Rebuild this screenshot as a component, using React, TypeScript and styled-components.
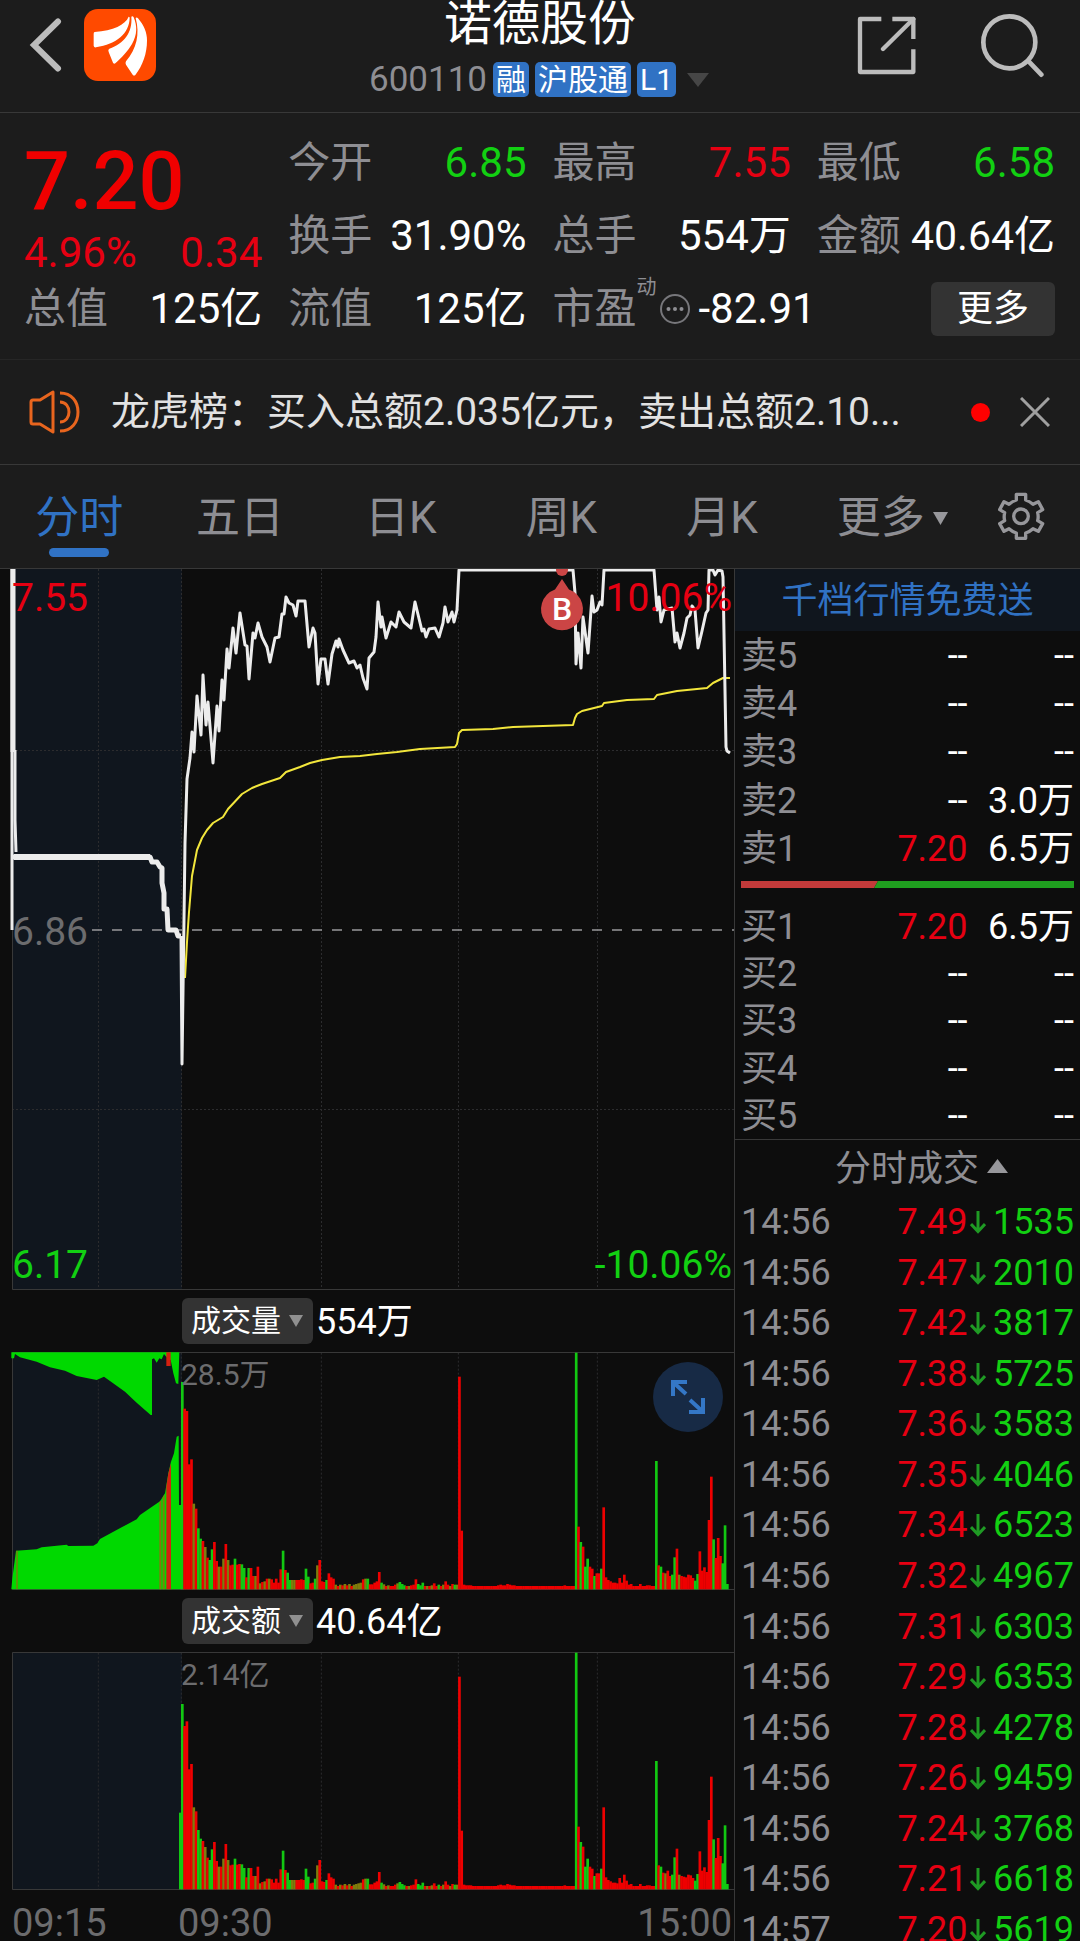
import React from "react";
import styled, { createGlobalStyle } from "styled-components";

const c = {
  panel: "#1c1c1c",
  page: "#0d0d0d",
  auction: "#10161e",
  line: "#383838",
  label: "#8e8e93",
  dim: "#6c6c6e",
  text: "#ffffff",
  up: "#e60012",
  down: "#12d012",
  blue: "#3072c4",
};

const GlobalStyle = createGlobalStyle`
  * { box-sizing: border-box; }
  body {
    margin: 0;
    background: ${c.page};
    color: ${c.text};
    font-family: Roboto, "Noto Sans CJK SC", sans-serif;
  }
  button, select { font: inherit; color: inherit; border: 0; padding: 0; margin: 0; background: none; }
  a { color: inherit; text-decoration: none; }
  h1, p, dl, dt, dd { margin: 0; font-weight: 400; }
  svg { display: block; flex-shrink: 0; }
`;

type Tone = "up" | "down" | "text" | "label";

const Screen = styled.div`
  display: flex;
  flex-direction: column;
  height: 100vh;
  overflow: hidden;
`;

/* ---------- header ---------- */

const Header = styled.header`
  display: grid;
  grid-template-columns: 1fr auto 1fr;
  flex: none;
  background: ${c.panel};
  border-bottom: 1px solid ${c.line};
`;

const HeaderSide = styled.div<{ $end?: boolean }>`
  display: flex;
  align-items: flex-start;
  justify-content: ${(p) => (p.$end ? "flex-end" : "flex-start")};
  gap: ${(p) => (p.$end ? 64 : 22)}px;
  padding: ${(p) => (p.$end ? "13px 36px 0 0" : "9px 0 0 28px")};
`;

const IconButton = styled.button`
  display: flex;
  align-items: center;
  justify-content: center;
  cursor: pointer;
`;

const TitleBlock = styled.div`
  display: flex;
  flex-direction: column;
  align-items: center;
  gap: 14px;
  padding-bottom: 15px;
`;

const StockName = styled.h1`
  font-size: 48px;
  line-height: 48px;
`;

const CodeRow = styled.div`
  display: flex;
  align-items: center;
  gap: 6px;
  height: 35px;
  padding-right: 2px;
  font-size: 35px;
  line-height: 35px;
  color: ${c.label};
`;

const Tag = styled.span`
  padding: 0 3px;
  border-radius: 5px;
  background: ${c.blue};
  color: ${c.text};
  font-size: 30px;
  line-height: 35px;
`;

const Caret = styled.svg<{ $gap: number }>`
  margin-left: ${(p) => p.$gap}px;
`;

/* ---------- quote ---------- */

const Quote = styled.section`
  display: grid;
  grid-template-columns: repeat(4, minmax(0, 1fr));
  grid-template-rows: repeat(3, 72px);
  column-gap: 26px;
  row-gap: 1px;
  flex: none;
  padding: 14px 25px 14px 24px;
  background: ${c.panel};
  border-bottom: 1px solid #262626;
  font-size: 42px;
  line-height: 50px;
`;

const PriceBlock = styled.div`
  grid-row: span 2;
  display: flex;
  flex-direction: column;
  gap: 14px;
  padding-top: 17px;
  color: ${c.up};
`;

const Price = styled.strong`
  font-size: 81px;
  line-height: 76px;
  font-weight: 500;
  color: #f00000;
`;

const Change = styled.div`
  display: flex;
  justify-content: space-between;
  line-height: 38px;
`;

const Stat = styled.dl`
  display: flex;
  align-items: center;
  justify-content: space-between;
  white-space: nowrap;
`;

const StatLabel = styled.dt`
  color: ${c.label};
`;

const StatValue = styled.dd<{ $tone?: Tone; $compact?: boolean }>`
  font-size: ${(p) => (p.$compact ? 41 : 42)}px;
  color: ${(p) => c[p.$tone ?? "text"]};
`;

const RatioStat = styled(Stat)`
  justify-content: flex-start;
`;

const Superscript = styled.span`
  align-self: flex-start;
  padding-top: 4px;
  margin-right: 2px;
  font-size: 20px;
  line-height: 20px;
  color: ${c.label};
`;

const RatioValue = styled(StatValue)`
  margin-left: 8px;
`;

const MoreButton = styled.button`
  align-self: center;
  justify-self: end;
  padding: 0 26px;
  border-radius: 6px;
  background: #333333;
  font-size: 36px;
  line-height: 54px;
  cursor: pointer;
`;

/* ---------- notice ---------- */

const Notice = styled.section`
  display: flex;
  align-items: center;
  flex: none;
  height: 105px;
  padding: 0 30px 0 28px;
  background: ${c.panel};
  border-bottom: 1px solid ${c.line};
`;

const NoticeText = styled.a`
  flex: 1;
  min-width: 0;
  margin-left: 31px;
  overflow: hidden;
  white-space: nowrap;
  font-size: 39px;
  line-height: 52px;
  color: #e2e2e2;
`;

const UnreadDot = styled.span`
  width: 19px;
  height: 19px;
  margin-right: 30px;
  border-radius: 50%;
  background: #ff0000;
`;

/* ---------- tabs ---------- */

const Tabs = styled.nav`
  display: grid;
  grid-template-columns: repeat(5, 161fr) 180fr 76fr;
  flex: none;
  height: 104px;
  padding-right: 21px;
  background: ${c.panel};
  border-bottom: 1px solid ${c.line};
  font-size: 44px;
  line-height: 60px;
`;

const Tab = styled.button<{ $active?: boolean }>`
  position: relative;
  display: flex;
  align-items: center;
  justify-content: center;
  padding: 3px 2px 0 0;
  color: ${(p) => (p.$active ? c.blue : c.label)};
  cursor: pointer;

  &::after {
    content: "";
    display: ${(p) => (p.$active ? "block" : "none")};
    position: absolute;
    bottom: 11px;
    width: 60px;
    height: 9px;
    border-radius: 5px;
    background: ${c.blue};
  }
`;

/* ---------- body ---------- */

const Body = styled.main`
  display: grid;
  grid-template-columns: 734fr 346fr;
  align-items: start;
  flex: 1;
  min-height: 0;
  overflow: hidden;
`;

const Charts = styled.section`
  min-width: 0;
`;

const Plot = styled.div`
  position: relative;

  > svg {
    width: 100%;
    height: auto;
  }
`;

type Corner = "topLeft" | "middleLeft" | "bottomLeft" | "topRight" | "bottomRight" | "session";
const corners: Record<Corner, string> = {
  topLeft: "top: 7px; left: 12px;",
  middleLeft: "top: 50%; left: 12px; margin-top: -20px;",
  bottomLeft: "bottom: 3px; left: 12px;",
  topRight: "top: 7px; right: 2px;",
  bottomRight: "bottom: 3px; right: 2px;",
  session: "top: 1px; left: 181px;",
};

const AxisLabel = styled.span<{ $at: Corner; $color: string }>`
  position: absolute;
  ${(p) => corners[p.$at]}
  font-size: ${(p) => (p.$at === "session" ? 30 : 39)}px;
  line-height: 44px;
  color: ${(p) => p.$color};
`;

const IndicatorBar = styled.div`
  display: flex;
  align-items: center;
  gap: 3px;
  height: 62px;
  padding-left: 182px;
  font-size: 36px;
  line-height: 46px;
`;

const Reading = styled.span`
  padding-top: 2px;
`;

const Picker = styled.label`
  position: relative;
  display: block;

  > svg {
    position: absolute;
    right: 10px;
    top: 17px;
    pointer-events: none;
  }
`;

const PickerSelect = styled.select`
  display: block;
  appearance: none;
  height: 46px;
  padding: 0 32px 0 9px;
  border-radius: 6px;
  background: #333333;
  font-size: 30px;
  line-height: 46px;
`;

const ExpandButton = styled.button`
  position: absolute;
  top: 10px;
  right: 11px;
  display: flex;
  align-items: center;
  justify-content: center;
  width: 70px;
  height: 70px;
  border-radius: 50%;
  background: #172a45;
  cursor: pointer;
`;

const TimeAxis = styled.div`
  display: grid;
  grid-template-columns: 166px 1fr auto;
  padding: 12px 2px 0 12px;
  font-size: 38px;
  line-height: 42px;
  color: ${c.dim};
`;

/* ---------- order book and trades ---------- */

const Side = styled.aside`
  border-left: 1px solid ${c.line};
`;

const Promo = styled.a`
  display: block;
  padding-top: 2px;
  background: ${c.auction};
  color: ${c.blue};
  font-size: 36px;
  line-height: 60px;
  text-align: center;
`;

const DataTable = styled.table<{ $height: number }>`
  width: 100%;
  height: ${(p) => p.$height}px;
  border-collapse: collapse;
  table-layout: fixed;
  font-size: 36px;
  line-height: 42px;
`;

const RowHead = styled.th`
  width: 37%;
  padding: 2px 0 0 6px;
  text-align: left;
  font-weight: 400;
  color: ${c.label};
`;

const Cell = styled.td<{ $tone?: Tone; $last?: boolean }>`
  padding: 2px ${(p) => (p.$last ? 6 : 2)}px 0 0;
  text-align: right;
  white-space: nowrap;
  color: ${(p) => c[p.$tone ?? "text"]};
`;

const PriceCell = styled(Cell)`
  width: 31%;
`;

const Quantity = styled.span`
  display: flex;
  align-items: center;
  justify-content: space-between;
`;

const BalanceBar = styled.div`
  margin: 9px 6px 14px;

  svg {
    width: 100%;
  }
`;

const TradesToggle = styled.button`
  display: flex;
  align-items: center;
  justify-content: center;
  width: 100%;
  height: 57px;
  padding: 2px 0 0 28px;
  border-top: 1px solid ${c.line};
  font-size: 36px;
  line-height: 42px;
  color: ${c.label};
  cursor: pointer;

  svg {
    margin-bottom: 6px;
  }
`;

/* ---------- icons ---------- */

const Down = ({ w, h, fill, gap = 0 }: { w: number; h: number; fill: string; gap?: number }) => (
  <Caret $gap={gap} width={w} height={h} viewBox="0 0 10 10" preserveAspectRatio="none">
    <path d="M0 0H10L5 10Z" fill={fill} />
  </Caret>
);

const BackIcon = () => (
  <svg width="34" height="72" viewBox="28 9 34 72" fill="none" stroke="#bcbcbc" strokeWidth="6" strokeLinecap="round">
    <path d="M58 21.500L34 45L58 68.500" strokeLinejoin="miter" />
  </svg>
);

const Logo = () => (
  <svg width="72" height="72" viewBox="252 27 216 216">
    <rect x="252" y="27" width="216" height="216" rx="42" fill="#ff4a00" />
    <g fill="#fff">
      <path d="M386 50C376 74 340 92 284 96Q281 97 281 101V137Q282 143 288 142C350 132 388 100 389 54Q389 50 386 50Z" />
      <path d="M394 50Q398 47 401 52C412 78 412 104 396 132C384 153 364 174 346 190Q342 193 339 188L326 156Q323 149 328 146C372 130 398 98 394 50Z" />
      <path d="M407 54Q410 50 414 55C432 76 441 98 441 122C441 160 428 196 406 225Q402 229 398 224L378 194Q375 189 378 184C410 146 420 102 407 54Z" />
    </g>
  </svg>
);

const ShareIcon = () => (
  <svg width="60" height="64" viewBox="48 39 180 192" fill="none" stroke="#bcbcbc" strokeWidth="13" strokeLinejoin="round">
    <path d="M124 57H60V216H220V148M157 57H220V117" />
    <path d="M220 57L129 147" strokeLinecap="round" />
  </svg>
);

const SearchIcon = () => (
  <svg width="64" height="66" viewBox="420 39 192 198" fill="none" stroke="#bcbcbc" strokeWidth="14" strokeLinecap="round">
    <circle cx="508" cy="127" r="78" />
    <path d="M566 184L604 224" />
  </svg>
);

const SpeakerIcon = () => (
  <svg width="52" height="46" viewBox="0 0 52 46" fill="none" stroke="#e8651e" strokeWidth="3" strokeLinejoin="round">
    <path d="M3 13Q3 11 5 11H12L25 3V43L12 35H5Q3 35 3 33Z" />
    <path d="M32 4C44 4 50 13 50 23S44 42 32 42" />
    <path d="M32 13C38 13 41 18 41 23S38 33 32 33" />
  </svg>
);

const CloseIcon = () => (
  <svg width="30" height="30" viewBox="0 0 30 30" stroke="#a0a0a0" strokeWidth="3">
    <path d="M1 1L29 29M29 1L1 29" />
  </svg>
);

const GearIcon = () => (
  <svg width="48" height="50" viewBox="532 336 144 150" fill="none" stroke="#97979b" strokeWidth="10" strokeLinejoin="round">
    <path d="M590 343H618V360Q630 364 640 373L656 365L669 389L654 398Q657 410 654 422L669 431L656 454L640 446Q630 455 618 459V475H590V459Q578 455 568 446L553 454L540 431L555 422Q552 410 555 398L540 389L553 365L568 373Q578 364 590 360Z" />
    <circle cx="604" cy="409" r="22" />
  </svg>
);

const DotsIcon = () => (
  <svg width="32" height="32" viewBox="0 0 32 32" fill={c.label}>
    <circle cx="16" cy="16" r="14" fill="none" stroke="#77777b" strokeWidth="2" />
    <circle cx="9.500" cy="16" r="2" />
    <circle cx="16" cy="16" r="2" />
    <circle cx="22.500" cy="16" r="2" />
  </svg>
);

const ExpandIcon = () => (
  <svg width="36" height="36" viewBox="0 0 36 36" fill="none" stroke="#3477c6" strokeWidth="4">
    <path d="M3 17V3H17M4 4L16 15" />
    <path d="M33 19V33H19M32 32L20 21" />
  </svg>
);

const ArrowDownIcon = () => (
  <svg width="16" height="24" viewBox="0 0 16 24" fill="none" stroke="#1f9a24" strokeWidth="3">
    <path d="M8 1V21M1 14L8 21.500L15 14" />
  </svg>
);

/* ---------- charts ---------- */

const priceLine =
  "181,936 182,1064 184,919 185,843 187,779 190,758 192,732 194,752 197,696 201,735 203,675 206,725 208,702 213,763 217,706 219,731 222,680 224,700 227,649 229,668 233,628 236,653 240,613 245,645 247,646 249,679 253,633 255,638 258,623 262,637 267,647 270,662 275,638 279,637 282,614 284,614 286,597 289,603 293,605 296,616 298,601 305,601 309,647 313,628 315,633 318,684 321,659 325,659 328,684 332,654 336,641 338,647 339,639 343,650 349,663 354,661 357,668 360,665 363,678 367,689 369,658 374,652 376,637 378,602 381,627 382,617 386,638 391,622 396,627 399,612 404,622 411,628 415,602 422,631 424,629 426,637 429,629 435,628 439,637 443,623 445,607 448,622 452,612 454,622 457,610 459,570 573,570 575,593 576,664 578,633 581,668 583,617 588,653 592,596 594,612 597,610 600,602 602,605 604,570 654,570 657,610 659,597 661,622 664,610 672,608 675,642 677,633 680,648 684,633 687,618 690,615 692,606 695,610 698,648 702,631 706,613 708,610 709,570 713,570 715,575 718,570 722,571 723,577 726,747 727,751 730,753";

const auctionLine =
  "12,857 150,857 152,862 157,862 160,867 162,868 162,883 164,893 164,909 167,909 168,930 176,930 178,936 181,936";

const averageLine =
  "185,978 187,942 189,912 192,876 197,850 202,838 207,830 213,823 223,817 228,809 242,794 252,788 262,784 280,778 286,772 300,767 310,763 322,760 340,757 360,756 377,754 397,752 420,749 455,747 457,744 459,733 462,730 493,729 513,727 573,725 575,718 577,714 582,711 602,706 604,703 627,700 654,699 657,695 677,691 707,688 713,683 723,678 730,678";

const gridX = [98, 181, 321, 458, 597];

const PriceChart = () => (
  <svg viewBox="0 569 734 721" role="img" aria-label="分时走势">
    <rect x="12" y="569" width="170" height="721" fill={c.auction} />
    <g stroke="#2c2c2e" strokeWidth="1" strokeDasharray="2 2">
      {gridX.map((x) => (
        <path key={x} d={`M${x + 0.5} 569V1289`} />
      ))}
      <path d="M12 750.500H734M12 1109.500H734" />
    </g>
    <path d="M12.500 569V1289.500H734" fill="none" stroke={c.line} />
    <path d="M92 930H734" stroke="#98989a" strokeWidth="1.500" strokeDasharray="10 10" />
    <polyline points={averageLine} fill="none" stroke="#f2e63c" strokeWidth="2" strokeLinejoin="round" />
    <g fill="none" stroke="#ececec" strokeLinejoin="round">
      <path d="M12 569V930" strokeWidth="3" />
      <path d="M13 569V752" strokeWidth="5" />
      <path d="M15 750V820L16 852" strokeWidth="3" />
      <path d="M14 857H150" strokeWidth="6" />
      <polyline points={auctionLine} strokeWidth="5" />
      <polyline points={priceLine} strokeWidth="3" />
    </g>
    <g fill="#cb4545">
      <circle cx="562" cy="570" r="6" />
      <path d="M562 579L569 589.500A21 21 0 1 1 555 589.500Z" />
    </g>
    <text x="562" y="620" textAnchor="middle" fontSize="32" fontWeight="500" fill="#fff">
      B
    </text>
  </svg>
);

/* One entry per minute: colour letter (r, g, or m for a mixed minute) and bar height. */
const minutes = (
  "g622 r542 r535 r375 r390 m257 r242 g183 g152 r145 m127 r95 g88 g120 r142 r85 m68 r68 m92 r136 m88 r72 r74 g92 r74 r76 g75 g64 r36 g64 " +
  "r64 r40 m40 r68 m18 r22 m24 r32 m32 r30 r20 r32 r20 r60 g116 r58 g50 g28 m28 m28 r28 r28 r30 r28 g62 g38 r18 r20 g32 m72 " +
  "r88 r24 r22 g28 r48 r36 r32 m14 r10 m14 r12 m16 r12 m16 r10 m14 m16 m18 m20 r30 m32 g32 r15 r15 r20 r24 r52 g20 m15 r10 " +
  "m12 r10 r10 r14 m18 g22 g16 g12 r10 m10 r12 r14 r30 g16 g12 g20 r10 m10 r10 m12 r18 r10 g14 r10 m14 r24 r14 m10 r16 g14 " +
  "m14 r638 r176 r14 r12 r12 r12 r10 r10 r10 r10 r10 r10 r10 r10 r10 r10 r10 r12 r14 r12 r12 r16 r14 r12 r12 r10 r10 r10 r10 " +
  "r10 r10 r10 r10 r10 r10 r10 r10 r10 r10 r10 r10 r10 r10 r10 r10 r10 r12 r10 r10 r10 r10 g710 r188 g142 r128 g68 g92 r68 r62 " +
  "g40 r48 r48 g62 r246 r36 r28 r24 r20 r20 r18 r34 r20 r44 r26 r14 r16 r10 r10 r10 r16 r10 r10 r12 r12 r10 r10 g385 r72 g68 " +
  "r50 m48 r56 r40 g44 g96 r122 m44 r40 r38 r36 r44 r42 r34 g26 g46 r114 r56 r66 r52 r208 r338 g150 r94 r154 r100 g78 g192 g16"
)
  .split(" ")
  .map((s) => ({ tone: s[0], h: Number(s.slice(1)) }));

const amountOpening = [556, 490, 504, 360, 376, 246, 234, 178];
const tones: Record<string, string> = { r: "#ee0000", g: "#12c812", m: "#7f7c0c" };

const BarChart = ({ kind }: { kind: "volume" | "amount" }) => (
  <svg viewBox="0 216 2202 714" role="img" aria-label={kind === "volume" ? "成交量" : "成交额"}>
    <rect x="36" y="216" width="510" height="714" fill={c.auction} />
    <g stroke="#2c2c2e" strokeWidth="3" strokeDasharray="6 6">
      {gridX.map((x) => (
        <path key={x} d={`M${x * 3 + 1} 218V928`} />
      ))}
    </g>
    <path d="M2202 217.500H37.500V928.500H2202" fill="none" stroke={c.line} strokeWidth="3" />
    {kind === "volume" ? (
      <g>
        <path
          fill="#00d900"
          d="M34 928L37 895L48 812L110 808L125 802L200 794L205 798L280 797L292 790L300 777L365 742L410 718L420 705L480 664L495 640L505 580L513 545L522 520L530 470L536 467L537 675H544V928Z"
        />
        <path
          fill="#00d900"
          d="M34 217V235H42L45 222L60 232L110 245L150 262L195 272L230 288L290 300L312 290L330 303L375 335L410 368L452 405H456V238L462 235L470 248L478 235L485 238L492 222L500 232L512 240L520 280L528 310L535 312L538 217Z"
        />
        <path fill="#d42010" d="M499 217H512V258H499ZM499 928V620L505 580L513 550V928Z" />
        <path fill="#7f7c0c" d="M49 928V812H53V928ZM478 928V666L484 660V928ZM488 928V652L494 642V928Z" />
      </g>
    ) : (
      <rect x="537" y="698" width="8" height="230" fill={tones.g} />
    )}
    {minutes.map((m, i) => {
      const h = kind === "amount" && i < amountOpening.length ? amountOpening[i] : m.h;
      return <rect key={i} x={543 + i * 6.87} y={928 - h} width="8" height={h} fill={tones[m.tone]} />;
    })}
  </svg>
);

/* ---------- data ---------- */

const tabs = ["分时", "五日", "日K", "周K", "月K"];

type Level = [string, string, string];
const asks: Level[] = [
  ["卖5", "--", "--"],
  ["卖4", "--", "--"],
  ["卖3", "--", "--"],
  ["卖2", "--", "3.0万"],
  ["卖1", "7.20", "6.5万"],
];
const bids: Level[] = [
  ["买1", "7.20", "6.5万"],
  ["买2", "--", "--"],
  ["买3", "--", "--"],
  ["买4", "--", "--"],
  ["买5", "--", "--"],
];

const trades: Level[] = [
  ["14:56", "7.49", "1535"],
  ["14:56", "7.47", "2010"],
  ["14:56", "7.42", "3817"],
  ["14:56", "7.38", "5725"],
  ["14:56", "7.36", "3583"],
  ["14:56", "7.35", "4046"],
  ["14:56", "7.34", "6523"],
  ["14:56", "7.32", "4967"],
  ["14:56", "7.31", "6303"],
  ["14:56", "7.29", "6353"],
  ["14:56", "7.28", "4278"],
  ["14:56", "7.26", "9459"],
  ["14:56", "7.24", "3768"],
  ["14:56", "7.21", "6618"],
  ["14:57", "7.20", "5619"],
];

type StatProps = { label: string; value: string; tone?: Tone; compact?: boolean };

const StatItem = ({ label, value, tone, compact }: StatProps) => (
  <Stat>
    <StatLabel>{label}</StatLabel>
    <StatValue $tone={tone} $compact={compact}>
      {value}
    </StatValue>
  </Stat>
);

const Levels = ({ rows, height }: { rows: Level[]; height: number }) => (
  <DataTable $height={height}>
    <tbody>
      {rows.map(([name, price, size]) => (
        <tr key={name}>
          <RowHead scope="row">{name}</RowHead>
          <PriceCell $tone={price === "--" ? "text" : "up"}>{price}</PriceCell>
          <Cell $last>{size}</Cell>
        </tr>
      ))}
    </tbody>
  </DataTable>
);

const Indicator = ({ name, value }: { name: string; value: string }) => (
  <IndicatorBar>
    <Picker>
      <PickerSelect aria-label="指标" defaultValue={name}>
        <option>成交量</option>
        <option>成交额</option>
      </PickerSelect>
      <Down w={14} h={12} fill="#909090" />
    </Picker>
    <Reading>{value}</Reading>
  </IndicatorBar>
);

export default function App() {
  return (
    <Screen>
      <GlobalStyle />
      <Header>
        <HeaderSide>
          <IconButton aria-label="返回">
            <BackIcon />
          </IconButton>
          <Logo />
        </HeaderSide>
        <TitleBlock>
          <StockName>诺德股份</StockName>
          <CodeRow>
            <span>600110</span>
            <Tag>融</Tag>
            <Tag>沪股通</Tag>
            <Tag>L1</Tag>
            <Down w={22} h={14} fill="#464646" gap={5} />
          </CodeRow>
        </TitleBlock>
        <HeaderSide $end>
          <IconButton aria-label="分享">
            <ShareIcon />
          </IconButton>
          <IconButton aria-label="搜索">
            <SearchIcon />
          </IconButton>
        </HeaderSide>
      </Header>

      <Quote>
        <PriceBlock>
          <Price>7.20</Price>
          <Change>
            <span>4.96%</span>
            <span>0.34</span>
          </Change>
        </PriceBlock>
        <StatItem label="今开" value="6.85" tone="down" />
        <StatItem label="最高" value="7.55" tone="up" />
        <StatItem label="最低" value="6.58" tone="down" />
        <StatItem label="换手" value="31.90%" />
        <StatItem label="总手" value="554万" />
        <StatItem label="金额" value="40.64亿" compact />
        <StatItem label="总值" value="125亿" />
        <StatItem label="流值" value="125亿" />
        <RatioStat>
          <StatLabel>市盈</StatLabel>
          <Superscript>动</Superscript>
          <DotsIcon />
          <RatioValue>-82.91</RatioValue>
        </RatioStat>
        <MoreButton>更多</MoreButton>
      </Quote>

      <Notice>
        <SpeakerIcon />
        <NoticeText href="#notice">龙虎榜：买入总额2.035亿元，卖出总额2.10...</NoticeText>
        <UnreadDot />
        <IconButton aria-label="关闭">
          <CloseIcon />
        </IconButton>
      </Notice>

      <Tabs>
        {tabs.map((name, i) => (
          <Tab key={name} $active={i === 0}>
            {name}
          </Tab>
        ))}
        <Tab>
          更多
          <Down w={15} h={13} fill="#97979b" gap={8} />
        </Tab>
        <IconButton aria-label="设置">
          <GearIcon />
        </IconButton>
      </Tabs>

      <Body>
        <Charts>
          <Plot>
            <PriceChart />
            <AxisLabel $at="topLeft" $color={c.up}>7.55</AxisLabel>
            <AxisLabel $at="topRight" $color={c.up}>10.06%</AxisLabel>
            <AxisLabel $at="middleLeft" $color={c.dim}>6.86</AxisLabel>
            <AxisLabel $at="bottomLeft" $color={c.down}>6.17</AxisLabel>
            <AxisLabel $at="bottomRight" $color={c.down}>-10.06%</AxisLabel>
          </Plot>
          <Indicator name="成交量" value="554万" />
          <Plot>
            <BarChart kind="volume" />
            <AxisLabel $at="session" $color={c.dim}>28.5万</AxisLabel>
            <ExpandButton aria-label="全屏">
              <ExpandIcon />
            </ExpandButton>
          </Plot>
          <Indicator name="成交额" value="40.64亿" />
          <Plot>
            <BarChart kind="amount" />
            <AxisLabel $at="session" $color={c.dim}>2.14亿</AxisLabel>
          </Plot>
          <TimeAxis>
            <span>09:15</span>
            <span>09:30</span>
            <span>15:00</span>
          </TimeAxis>
        </Charts>

        <Side>
          <Promo href="#levels">千档行情免费送</Promo>
          <Levels rows={asks} height={241} />
          <BalanceBar>
            <svg height="7" viewBox="0 0 333 7" preserveAspectRatio="none">
              <path d="M0 0H137L133 7H0Z" fill="#c23a3a" />
              <path d="M137 0H333V7H133Z" fill="#1f9f1f" />
            </svg>
          </BalanceBar>
          <Levels rows={bids} height={237} />
          <TradesToggle>
            分时成交
            <Caret $gap={8} width="21" height="14" viewBox="0 0 21 14">
              <path d="M0 14H21L10.500 0Z" fill="#97979b" />
            </Caret>
          </TradesToggle>
          <DataTable $height={758}>
            <tbody>
              {trades.map(([time, price, size]) => (
                <tr key={price}>
                  <RowHead scope="row">{time}</RowHead>
                  <PriceCell $tone="up">{price}</PriceCell>
                  <Cell $tone="down" $last>
                    <Quantity>
                      <ArrowDownIcon />
                      {size}
                    </Quantity>
                  </Cell>
                </tr>
              ))}
            </tbody>
          </DataTable>
        </Side>
      </Body>
    </Screen>
  );
}
